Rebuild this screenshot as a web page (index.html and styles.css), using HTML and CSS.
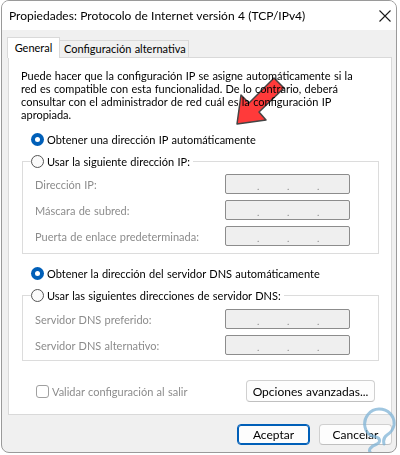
FILE: index.html
```html
<!DOCTYPE html>
<html lang="es">
<head>
<meta charset="utf-8">
<title>Propiedades: Protocolo de Internet versión 4 (TCP/IPv4)</title>
<link rel="stylesheet" href="styles.css">
</head>
<body>
<div class="window">
  <div class="titlebar">
    <span class="title">Propiedades: Protocolo de Internet versión 4 (TCP/IPv4)</span>
    <svg class="close" width="12" height="12" viewBox="0 0 12 12"><path d="M0.5 0.5 L11.5 11.5 M11.5 0.5 L0.5 11.5" stroke="#1a1a1a" stroke-width="1.1" fill="none"/></svg>
  </div>
  <div class="body">
    <div class="tabs">
      <div class="tab active">General</div>
      <div class="tab">Configuración alternativa</div>
    </div>
    <div class="panel">
      <p class="intro">Puede hacer que la configuración IP se asigne automáticamente si la red es compatible con esta funcionalidad. De lo contrario, deberá consultar con el administrador de red cuál es la configuración IP apropiada.</p>

      <div class="radio-row first"><span class="radio on"></span><span>Obtener una dirección IP automáticamente</span></div>

      <fieldset class="group">
        <legend class="radio-row"><span class="radio"></span><span>Usar la siguiente dirección IP:</span></legend>
        <div class="field"><span class="lbl">Dirección IP:</span><span class="ip"><i>.</i><i>.</i><i>.</i></span></div>
        <div class="field"><span class="lbl">Máscara de subred:</span><span class="ip"><i>.</i><i>.</i><i>.</i></span></div>
        <div class="field"><span class="lbl">Puerta de enlace predeterminada:</span><span class="ip"><i>.</i><i>.</i><i>.</i></span></div>
      </fieldset>

      <div class="radio-row second"><span class="radio on"></span><span>Obtener la dirección del servidor DNS automáticamente</span></div>

      <fieldset class="group dns">
        <legend class="radio-row"><span class="radio"></span><span>Usar las siguientes direcciones de servidor DNS:</span></legend>
        <div class="field"><span class="lbl">Servidor DNS preferido:</span><span class="ip"><i>.</i><i>.</i><i>.</i></span></div>
        <div class="field"><span class="lbl">Servidor DNS alternativo:</span><span class="ip"><i>.</i><i>.</i><i>.</i></span></div>
      </fieldset>

      <div class="bottom-row">
        <div class="check"><span class="box"></span><span>Validar configuración al salir</span></div>
        <button class="btn adv">Opciones avanzadas...</button>
      </div>
    </div>
    <div class="actions">
      <button class="btn primary">Aceptar</button>
      <button class="btn">Cancelar</button>
    </div>
  </div>

  <svg class="arrow" width="60" height="60" viewBox="230 75 60 60">
    <polygon points="273,78 283,88 258,112 265,120 236,124 240,95 248,103" fill="#ff3a3a" stroke="#444" stroke-width="1.5" stroke-linejoin="round"/>
  </svg>

  <svg class="logo" width="50" height="56" viewBox="0 0 50 56">
    <path d="M22 54 C16 50 22 46 27 44 C31 42 30 38 26 37 C20 36 16 33 15 27 C13 18 20 9 29 9 C38 9 45 16 44 25 C43 31 40 33 37 35 C34 37 33 40 34 44" fill="none" stroke="#7fb3d5" stroke-width="3" stroke-linecap="round" opacity="0.75"/>
  </svg>
</div>
</body>
</html>
```
FILE: styles.css
```css
* { box-sizing: border-box; }

html, body {
  margin: 0;
  padding: 0;
  background: #ffffff;
}

body {
  font-family: Lato, "Noto Sans", sans-serif;
  font-size: 11px;
  word-spacing: 0.5px;
  color: #000;
  width: 400px;
  height: 455px;
  overflow: hidden;
}

.window {
  position: relative;
  margin-left: 1px;
  width: 396px;
  height: 453px;
  border: 1px solid #9a9a9a;
  border-radius: 8px;
  overflow: hidden;
  display: flex;
  flex-direction: column;
  background: #f0f0f0;
}

.titlebar {
  height: 29px;
  background: #ffffff;
  display: flex;
  align-items: center;
  justify-content: space-between;
  padding: 0 5px 0 7px;
  flex-shrink: 0;
}

.title {
  font-size: 12px;
  word-spacing: 0.3px;
  color: #000;
}

.body {
  flex: 1;
  padding: 7px 4px 0 6px;
  display: flex;
  flex-direction: column;
}

.tabs {
  display: flex;
  align-items: flex-end;
  height: 20px;
  position: relative;
  z-index: 1;
}

.tab {
  height: 17px;
  padding: 0 4px;
  border: 1px solid #d9d9d9;
  border-bottom: none;
  background: #f0f0f0;
  line-height: 15px;
  margin-left: -1px;
  width: 130px;
  text-align: center;
  white-space: nowrap;
}

.tab.active {
  height: 21px;
  margin-left: -1px;
  padding: 0;
  background: #ffffff;
  line-height: 19px;
  margin-bottom: -1px;
  width: 53px;
}

.panel {
  background: #ffffff;
  border: 1px solid #d9d9d9;
  height: 358px;
  width: 384px;
  padding: 11px 12px 0 12px;
  display: flex;
  flex-direction: column;
}

.intro {
  margin: 0;
  line-height: 13px;
  max-width: 340px;
}

.radio-row {
  display: flex;
  align-items: center;
  gap: 3px;
  height: 14px;
}

.radio-row.first { margin: 11px 0 0 10px; }
.radio-row.second { margin: 12px 0 0 10px; }

.radio {
  width: 13px;
  height: 13px;
  border-radius: 50%;
  border: 1px solid #555;
  background: #fafafa;
  flex-shrink: 0;
}

.radio.on {
  border: none;
  background: #005fb8;
  position: relative;
}

.radio.on::after {
  content: "";
  position: absolute;
  left: 4px;
  top: 4px;
  width: 5px;
  height: 5px;
  border-radius: 50%;
  background: #fff;
}

.group {
  margin: 8px 0 0 1px;
  width: 357px;
  border: 1px solid #dcdcdc;
  border-radius: 0;
  padding: 6px 0 7px 12px;
  display: flex;
  flex-direction: column;
  gap: 6px;
}

.group legend {
  padding: 0 3px 0 0;
  margin-left: -4px;
}

.group.dns {
  margin-top: 8px;
  padding-top: 7px;
  padding-bottom: 5px;
}

.field {
  display: flex;
  align-items: center;
  justify-content: space-between;
  height: 20px;
  padding-right: 28px;
}

.lbl {
  color: #8c8c8c;
}

.ip {
  width: 125px;
  height: 20px;
  background: #efefef;
  border: 1px solid #8c8c8c;
  border-radius: 2px;
  display: flex;
  padding-left: 31px;
  gap: 27px;
  align-items: flex-end;
}

.ip i {
  font-style: normal;
  color: #8a8a8a;
  font-size: 10px;
  line-height: 13px;
  width: 3px;
}

.bottom-row {
  display: flex;
  align-items: center;
  justify-content: space-between;
  margin-top: 19px;
  padding: 0 4px 0 15px;
}

.check {
  display: flex;
  align-items: center;
  gap: 3px;
  color: #8c8c8c;
}

.check .box {
  width: 13px;
  height: 13px;
  border: 1px solid #a0a0a0;
  border-radius: 3px;
  background: #fff;
}

.btn {
  font-family: inherit;
  font-size: 12px;
  word-spacing: 0.5px;
  background: #fdfdfd;
  border: 1px solid #d0d0d0;
  border-bottom-color: #c0c0c0;
  border-radius: 4px;
  height: 22px;
  padding: 0;
  color: #000;
}

.btn.adv { width: 129px; }

.actions {
  display: flex;
  justify-content: flex-end;
  gap: 9px;
  margin-top: 9px;
}

.actions .btn { width: 73px; height: 21px; }

.btn.primary {
  border: 1px solid #005fb8;
  box-shadow: inset 0 0 0 1px #005fb8;
}

.arrow {
  position: absolute;
  left: 229px;
  top: 74px;
  mix-blend-mode: multiply;
}

.logo {
  position: absolute;
  right: -4px;
  bottom: -4px;
}
```
